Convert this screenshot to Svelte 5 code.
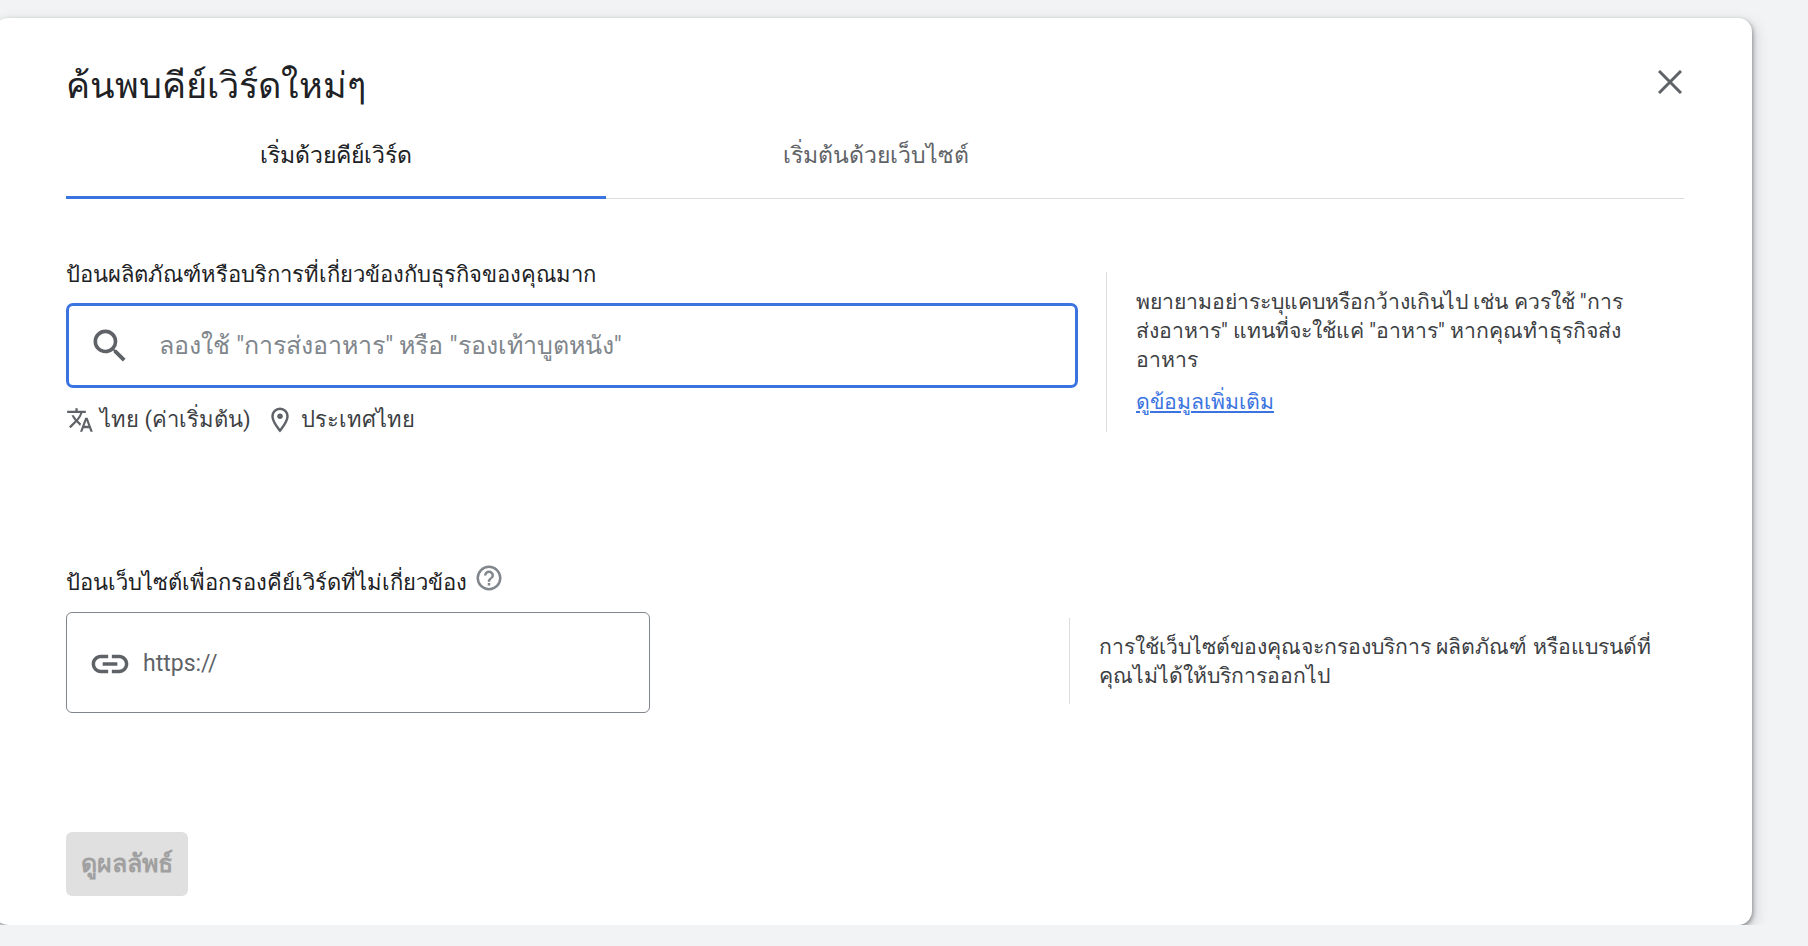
<script lang="ts">
  type Tab = { label: string; active?: boolean };

  const tabs: Tab[] = [
    { label: "เริ่มด้วยคีย์เวิร์ด", active: true },
    { label: "เริ่มต้นด้วยเว็บไซต์" },
  ];
</script>

<main class="dialog">
  <header class="dialog-head">
    <h1>ค้นพบคีย์เวิร์ดใหม่ๆ</h1>
    <button type="button" class="close" aria-label="ปิด">
      <svg viewBox="0 0 24 24" width="24" height="24">
        <path d="M1 1 23 23M23 1 1 23" fill="none" stroke="#5f6368" stroke-width="3" />
      </svg>
    </button>
  </header>

  <div class="tabs" role="tablist">
    {#each tabs as tab (tab.label)}
      <button type="button" class="tab" class:active={tab.active} role="tab">{tab.label}</button>
    {/each}
  </div>

  <section class="keyword-section">
    <div class="field">
      <label class="field-label" for="keywords">ป้อนผลิตภัณฑ์หรือบริการที่เกี่ยวข้องกับธุรกิจของคุณมาก</label>
      <div class="search-box">
        <svg viewBox="0 0 24 24" width="44" height="44">
          <path fill="#5f6368" d="M15.5 14h-.79l-.28-.27A6.47 6.47 0 0 0 16 9.5 6.5 6.5 0 1 0 9.5 16c1.61 0 3.09-.59 4.23-1.57l.27.28v.79l5 4.99L20.49 19l-4.99-5zm-6 0C7.01 14 5 11.99 5 9.5S7.01 5 9.5 5 14 7.01 14 9.5 11.99 14 9.5 14z" />
        </svg>
        <input id="keywords" placeholder={'ลองใช้ "การส่งอาหาร" หรือ "รองเท้าบูตหนัง"'} />
      </div>
      <div class="meta">
        <svg viewBox="0 0 24 24" width="28" height="28">
          <path fill="#5f6368" d="m12.87 15.07-2.54-2.51.03-.03A17.52 17.52 0 0 0 14.07 6H17V4h-7V2H8v2H1v2h11.17C11.5 7.92 10.44 9.75 9 11.35 8.07 10.32 7.3 9.19 6.69 8h-2c.73 1.63 1.73 3.17 2.98 4.56l-5.09 5.02L4 19l5-5 3.11 3.11.76-2.04zM18.5 10h-2L12 22h2l1.12-3h4.75L21 22h2l-4.5-12zm-2.62 7 1.62-4.33L19.12 17h-3.24z" />
        </svg>
        <span>ไทย (ค่าเริ่มต้น)</span>
        <svg class="pin" viewBox="0 0 24 24" width="30" height="30">
          <path fill="#5f6368" d="M12 2a7 7 0 0 0-7 7c0 5.25 7 13 7 13s7-7.75 7-13a7 7 0 0 0-7-7zm0 17c-2.2-2.8-5-7-5-10a5 5 0 0 1 10 0c0 3-2.8 7.2-5 10z" />
          <circle cx="12" cy="9" r="2.2" fill="#5f6368" />
        </svg>
        <span>ประเทศไทย</span>
      </div>
    </div>
    <aside class="hint hint-first">
      <p>พยายามอย่าระบุแคบหรือกว้างเกินไป เช่น ควรใช้ "การ<br />ส่งอาหาร" แทนที่จะใช้แค่ "อาหาร" หากคุณทำธุรกิจส่ง<br />อาหาร</p>
      <a href="#more">ดูข้อมูลเพิ่มเติม</a>
    </aside>
  </section>

  <section class="site-section">
    <div class="field">
      <div class="field-label site-label">
        <label for="site">ป้อนเว็บไซต์เพื่อกรองคีย์เวิร์ดที่ไม่เกี่ยวข้อง</label>
        <svg viewBox="0 0 24 24" width="30" height="30">
          <path fill="#80868b" d="M11 18h2v-2h-2v2zm1-16a10 10 0 1 0 0 20 10 10 0 0 0 0-20zm0 18a8 8 0 1 1 0-16 8 8 0 0 1 0 16zm0-14a4 4 0 0 0-4 4h2a2 2 0 1 1 4 0c0 2-3 1.75-3 5h2c0-2.25 3-2.5 3-5a4 4 0 0 0-4-4z" />
        </svg>
      </div>
      <div class="site-box">
        <svg viewBox="0 0 24 24" width="44" height="44">
          <path fill="#5f6368" d="M3.9 12c0-1.71 1.39-3.1 3.1-3.1h4V7H7c-2.76 0-5 2.24-5 5s2.24 5 5 5h4v-1.9H7c-1.71 0-3.1-1.39-3.1-3.1zM8 13h8v-2H8v2zm9-6h-4v1.9h4c1.71 0 3.1 1.39 3.1 3.1s-1.39 3.1-3.1 3.1h-4V17h4c2.76 0 5-2.24 5-5s-2.24-5-5-5z" />
        </svg>
        <input id="site" placeholder="https://" />
      </div>
    </div>
    <aside class="hint hint-second">
      <p>การใช้เว็บไซต์ของคุณจะกรองบริการ ผลิตภัณฑ์ หรือแบรนด์ที่<br />คุณไม่ได้ให้บริการออกไป</p>
    </aside>
  </section>

  <button type="button" class="submit" disabled>ดูผลลัพธ์</button>
</main>

<style>
  :global(body) {
    background: #f1f3f4;
    overflow: hidden;
  }

  .dialog {
    box-sizing: border-box;
    width: 1758px;
    height: 907px;
    margin: 18px 0 0 -6px;
    padding: 0 68px 0 72px;
    background: #fff;
    border-radius: 14px;
    box-shadow: 1px 2px 4px rgba(60, 64, 67, 0.5), 4px 4px 14px rgba(60, 64, 67, 0.16);
    font-family: Roboto, "Noto Sans", sans-serif;
    color: #202124;
  }

  .dialog-head {
    display: flex;
    justify-content: space-between;
    align-items: flex-start;
    height: 100px;
  }

  h1 {
    margin: 46px 0 0;
    font-size: 36px;
    line-height: 44px;
    font-weight: 400;
  }

  .close {
    margin: 52px 2px 0 0;
    padding: 0;
    border: 0;
    background: none;
    height: 24px;
  }

  .tabs {
    display: flex;
    height: 81px;
    border-bottom: 1px solid #dadce0;
    box-sizing: border-box;
  }

  .tab {
    width: 540px;
    padding: 0 0 3px;
    border: 0;
    border-bottom: 3px solid transparent;
    margin-bottom: -1px;
    background: none;
    font: 500 23px/32px Roboto, "Noto Sans", sans-serif;
    color: #5f6368;
  }

  .tab.active {
    color: #202124;
    border-bottom-color: #3b74e0;
  }

  .keyword-section {
    display: flex;
    margin-top: 61px;
    height: 308px;
  }

  .field {
    flex: none;
  }

  .field-label {
    display: block;
    height: 30px;
    font-size: 22px;
    line-height: 30px;
    font-weight: 500;
  }

  .search-box {
    box-sizing: border-box;
    display: flex;
    align-items: center;
    gap: 27px;
    width: 1012px;
    height: 85px;
    margin-top: 13px;
    padding-left: 20px;
    border: 3px solid #3b74e0;
    border-radius: 7px;
  }

  .search-box svg {
    margin-left: -1px;
  }

  input {
    flex: 1;
    min-width: 0;
    border: 0;
    outline: 0;
    padding: 0;
    background: none;
    font: 400 25px/32px Roboto, "Noto Sans", sans-serif;
  }

  input::placeholder {
    color: #80868b;
    opacity: 1;
  }

  .meta {
    display: flex;
    align-items: center;
    gap: 6px;
    margin-top: 16px;
    font-size: 22px;
    line-height: 32px;
    color: #3c4043;
  }

  .pin {
    margin-left: 8px;
  }

  .hint {
    box-sizing: border-box;
    border-left: 1px solid #dadce0;
    font-size: 21.2px;
    line-height: 29px;
    color: #3c4043;
  }

  .hint p {
    margin: 0;
  }

  .hint-first {
    width: 578px;
    height: 160px;
    margin: 12px 0 0 28px;
    padding: 15px 40px 0 29px;
  }

  .hint-first a {
    display: block;
    margin-top: 13px;
    color: #3b74e0;
    text-decoration: underline;
  }

  .site-section {
    display: flex;
    height: 264px;
  }

  .site-label {
    display: flex;
    align-items: flex-start;
    gap: 7px;
  }

  .site-label svg {
    margin-top: -5px;
  }

  .site-box {
    box-sizing: border-box;
    display: flex;
    align-items: center;
    gap: 11px;
    width: 584px;
    height: 101px;
    margin-top: 14px;
    padding: 2px 0 0 21px;
    border: 1px solid #80868b;
    border-radius: 6px;
  }

  .site-box input {
    font-size: 23px;
  }

  .site-box input::placeholder {
    color: #5f6368;
  }

  .hint-second {
    width: 615px;
    height: 86px;
    margin: 50px 0 0 419px;
    padding: 14px 0 0 29px;
  }

  .submit {
    display: block;
    width: 122px;
    height: 64px;
    padding: 0;
    border: 0;
    border-radius: 6px;
    background: #e0e0e0;
    color: #a0a0a0;
    font: 700 25px/32px Roboto, "Noto Sans", sans-serif;
  }
</style>
